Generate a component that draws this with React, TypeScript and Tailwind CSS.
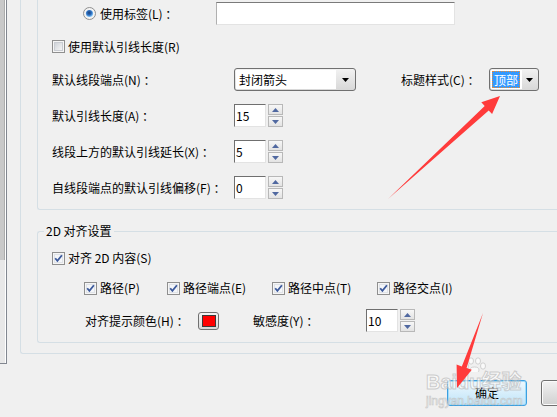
import React from "react";

const Check = ({ checked }: { checked: boolean }) => (
  <svg width="13" height="13" viewBox="0 0 13 13" className="shrink-0">
    <defs>
      <linearGradient id="cbg" x1="0" y1="0" x2="1" y2="1">
        <stop offset="0" stopColor="#cdd1d7" />
        <stop offset="1" stopColor="#f7f7f7" />
      </linearGradient>
    </defs>
    <rect x="0.5" y="0.5" width="12" height="12" fill="#f5f5f5" stroke="#8f8f8f" />
    <rect x="2.5" y="2.5" width="8" height="8" fill={checked ? "#f4f6f9" : "url(#cbg)"} stroke={checked ? "#e0e3e8" : "#c9ccd2"} />
    {checked && <path d="M3.2 6.2 L5.4 8.9 L9.9 3.2" fill="none" stroke="#3d5a9c" strokeWidth="1.8" />}
  </svg>
);

const Radio = () => (
  <svg width="13" height="13" viewBox="0 0 13 13" className="shrink-0">
    <defs>
      <radialGradient id="rd" cx="0.45" cy="0.4" r="0.6">
        <stop offset="0" stopColor="#1c3f78" />
        <stop offset="0.55" stopColor="#2c6fc0" />
        <stop offset="1" stopColor="#8fd0ff" />
      </radialGradient>
    </defs>
    <circle cx="6.5" cy="6.5" r="6" fill="#f3f3f3" stroke="#8f8f8f" />
    <circle cx="6.5" cy="6.5" r="3.6" fill="url(#rd)" />
  </svg>
);

const SpinBtn = ({ up }: { up?: boolean }) => (
  <div className="w-[15px] h-[11px] border border-[#b8b8b8] bg-linear-to-b from-[#f7f7f7] to-[#e3e3e3] flex items-center justify-center">
    <svg width="7" height="4" viewBox="0 0 7 4">
      <path d={up ? "M0 4 L3.5 0 L7 4Z" : "M0 0 L7 0 L3.5 4Z"} fill="#5068a0" />
    </svg>
  </div>
);

const Spin = ({ value }: { value: string }) => (
  <div className="flex items-center gap-[2px]">
    <div className="w-[32px] h-[23px] bg-white border border-t-[#6f6f6f] border-l-[#6f6f6f] border-r-[#e3e3e3] border-b-[#e3e3e3] pl-[1px] flex items-center">
      {value}
    </div>
    <div className="flex flex-col gap-[1px]">
      <SpinBtn up />
      <SpinBtn />
    </div>
  </div>
);

const Arrow = () => (
  <svg width="7" height="4" viewBox="0 0 7 4">
    <path d="M0 0H7L3.5 4Z" fill="#000" />
  </svg>
);

export default function App() {
  return (
    <div className="relative w-[557px] h-[417px] overflow-hidden bg-[#f0f0f0] text-[12px] leading-[16px] text-black font-[family-name:'Noto_Sans_CJK_SC',sans-serif]">
      <div className="flex items-start">
        {/* list box edge with scrollbar */}
        <div className="w-[7px] h-[364px] flex border-r border-b border-[#828790]">
          <div className="w-[5px] flex flex-col">
            <div className="h-[260px] bg-[#c9c9c9] border-r border-[#acacac]" />
            <div className="flex-1 bg-[#e8e8e8]" />
          </div>
          <div className="w-[1px] bg-white" />
        </div>

        <div className="ml-[13px] flex-1 flex flex-col">
          {/* outer group */}
          <div className="border-l border-b border-[#d5dfe5] rounded-bl-[3px] pl-[16px] pb-[10px]">
            {/* group 1 */}
            <div className="border-l border-b border-[#d5dfe5] rounded-bl-[3px] pl-[14px] pb-[10px] flex flex-col">
              <div className="h-[27px] flex items-center">
                <div className="w-[164px] pl-[31px] flex items-center gap-[4px]">
                  <Radio />
                  <span>使用标签(L) ：</span>
                </div>
                <div className="w-[239px] h-[23px] bg-white border border-t-[#7a7a7a] border-l-[#b0b0b0] border-r-[#e3e3e3] border-b-[#e3e3e3]" />
              </div>
              <div className="mt-[8px] h-[23px] flex items-center gap-[3px]">
                <Check checked={false} />
                <span>使用默认引线长度(R)</span>
              </div>
              <div className="mt-[10px] h-[23px] flex items-center">
                <span className="w-[182px]">默认线段端点(N) ：</span>
                <div className="w-[122px] h-[23px] rounded-[3px] border border-[#707070] bg-linear-to-b from-[#f2f2f2] to-[#d8d8d8] flex p-[1px]">
                  <div className="flex-1 bg-white flex items-center pl-[3px]">封闭箭头</div>
                  <div className="w-[18px] flex items-center justify-center">
                    <Arrow />
                  </div>
                </div>
                <span className="ml-[45px] w-[88px]">标题样式(C) ：</span>
                <div className="w-[50px] h-[23px] rounded-[3px] border border-[#707070] bg-linear-to-b from-[#f2f2f2] to-[#d8d8d8] flex p-[1px]">
                  <div className="w-[31px] bg-white flex items-center pl-[1px]">
                    <span className="bg-[#3399ff] text-white border border-dotted border-[#f08a30] leading-[15px] px-[1px]">顶部</span>
                  </div>
                  <div className="flex-1 flex items-center justify-center">
                    <Arrow />
                  </div>
                </div>
              </div>
              <div className="mt-[13px] h-[23px] flex items-center">
                <span className="w-[182px]">默认引线长度(A) ：</span>
                <Spin value="15" />
              </div>
              <div className="mt-[13px] h-[23px] flex items-center">
                <span className="w-[182px]">线段上方的默认引线延长(X) ：</span>
                <Spin value="5" />
              </div>
              <div className="mt-[13px] h-[23px] flex items-center">
                <span className="w-[182px]">自线段端点的默认引线偏移(F) ：</span>
                <Spin value="0" />
              </div>
            </div>

            {/* group 2 */}
            <fieldset className="mt-[13px] border-l border-t border-b border-[#d5dfe5] rounded-tl-[3px] rounded-bl-[3px] pb-[10px]">
              <legend className="ml-[6px] px-[2px] leading-[16px]">2D 对齐设置</legend>
              <div className="mt-[9px] h-[20px] pl-[14px] flex items-center gap-[3px]">
                <Check checked />
                <span>对齐 2D 内容(S)</span>
              </div>
              <div className="mt-[10px] h-[20px] pl-[46px] flex items-center">
                <div className="w-[83px] flex items-center gap-[3px]">
                  <Check checked />
                  <span>路径(P)</span>
                </div>
                <div className="w-[105px] flex items-center gap-[3px]">
                  <Check checked />
                  <span>路径端点(E)</span>
                </div>
                <div className="w-[105px] flex items-center gap-[3px]">
                  <Check checked />
                  <span>路径中点(T)</span>
                </div>
                <div className="flex items-center gap-[3px]">
                  <Check checked />
                  <span>路径交点(I)</span>
                </div>
              </div>
              <div className="mt-[11px] h-[23px] pl-[47px] flex items-center">
                <span className="w-[113px]">对齐提示颜色(H) ：</span>
                <div className="w-[21px] h-[18px] rounded-[3px] border border-[#707070] bg-linear-to-b from-[#f4f4f4] to-[#d8d8d8] flex items-center justify-center">
                  <div className="w-[14px] h-[12px] border border-[#3a3a3a] bg-[#ff0000]" />
                </div>
                <span className="ml-[34px] w-[113px]">敏感度(Y) ：</span>
                <Spin value="10" />
              </div>
            </fieldset>
          </div>

          {/* buttons */}
          <div className="mt-[26px] pl-[427px] flex gap-[14px]">
            <div className="shrink-0 w-[80px] h-[26px] rounded-[3px] border border-[#3c9fe0] shadow-[inset_0_0_0_1px_#9fdcfb] bg-linear-to-b from-[#eef8fe] to-[#bfe4f8] flex items-center justify-center">
              确定
            </div>
            <div className="shrink-0 w-[80px] h-[26px] rounded-[3px] border border-[#707070] shadow-[inset_0_0_0_1px_#fbfbfb] bg-linear-to-b from-[#f2f2f2] to-[#d0d0d0]" />
          </div>
        </div>
      </div>

      {/* watermark */}
      <div className="absolute left-[426px] top-[356px] pointer-events-none opacity-70 flex flex-col">
        <svg width="100" height="16" viewBox="0 0 100 16">
          <g fill="#ffffff" stroke="#c4c4c4" strokeWidth="1">
            <ellipse cx="40" cy="10" rx="2.5" ry="3.2" />
            <ellipse cx="45" cy="5" rx="2.5" ry="3.2" />
            <ellipse cx="52" cy="5" rx="2.5" ry="3.2" />
            <ellipse cx="57" cy="10" rx="2.5" ry="3.2" />
            <ellipse cx="48.5" cy="14" rx="4.5" ry="3" />
          </g>
        </svg>
        <div className="text-[20px] leading-[20px] font-bold text-white [-webkit-text-stroke:1px_#bdbdbd] font-[family-name:'Liberation_Sans','Noto_Sans_CJK_SC',sans-serif]">
          Baidu经验
        </div>
        <div className="mt-[3px] text-[12px] leading-[12px] text-white [-webkit-text-stroke:0.6px_#b5b5b5] font-[family-name:'Liberation_Sans',sans-serif]">
          jingyan.baidu.com
        </div>
      </div>

      {/* red annotation arrows */}
      <svg className="absolute left-0 top-0 pointer-events-none" width="557" height="417" viewBox="0 0 557 417">
        <polygon points="388,199 484.7,106 481.3,102.3 500,96 492.1,114.1 488.7,110.4" fill="#ff3b3b" />
        <polygon points="483,313 466.6,368 471.8,369.8 457,388 456.6,364.6 461.8,366.4" fill="#ff3b3b" />
      </svg>
    </div>
  );
}
